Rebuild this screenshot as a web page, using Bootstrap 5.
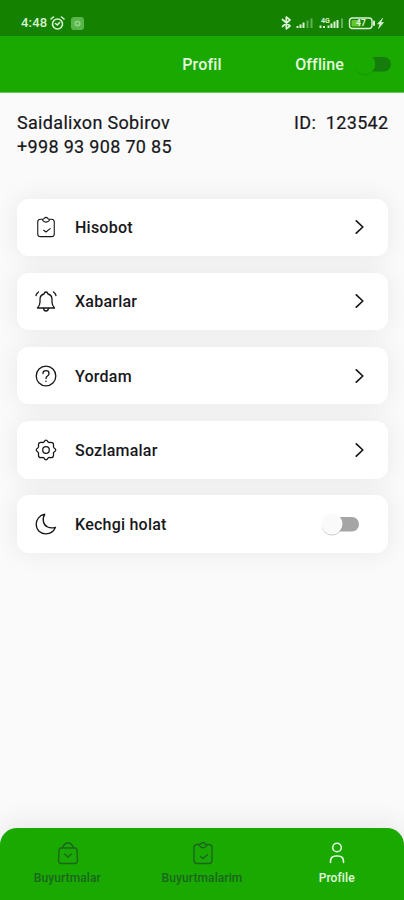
<!DOCTYPE html>
<html lang="uz">
<head>
<meta charset="utf-8">
<meta name="viewport" content="width=device-width, initial-scale=1">
<title>Profil</title>
<link rel="stylesheet" href="https://cdn.jsdelivr.net/npm/bootstrap@5.3.0/dist/css/bootstrap.min.css">
<style>
body{font-family:Roboto,"Liberation Sans",sans-serif;background:#fafafa;color:#17171b;font-weight:500;overflow:hidden}
svg{display:block;flex:none;fill:none;stroke:currentColor;stroke-linecap:round;stroke-linejoin:round}
svg.solid{stroke:none}
.status{height:36px;background:#148200;color:#d9f2d3;padding:10px 19px 0 21px}
.clock{font-size:13px;line-height:26px;letter-spacing:.2px;width:29px}
.chip{width:13px;height:13px;border-radius:3px;background:#58b44b;margin-left:6px}
.dot{stroke:#8bd381}
.topbar{height:57px;background:#1aa900;color:#e4f8df;border-bottom:1px solid #66c755;font-size:16px}
.topbar .title{letter-spacing:.2px;padding-top:1px}
.topbar .toggle{letter-spacing:.12px;padding-top:2px}
.topbar .toggle svg{margin-right:12px}
.who{font-size:18px;line-height:24px;padding:18px 16px 0 17px;height:105.5px;font-weight:400;-webkit-text-stroke:.2px currentColor}
.who .nm{letter-spacing:.32px}
.who .ph{letter-spacing:.32px}
.who .idn{letter-spacing:.34px;margin-right:-.5px;white-space:pre}
.menu{gap:16.6px;padding:0 16px 0 17px}
.item{height:57.6px;border-radius:12px;background:#fff;color:inherit;padding:0 24.5px 0 18px;font-size:16px;letter-spacing:.23px;position:relative}
.item::before{content:"";position:absolute;inset:0;border-radius:12px;box-shadow:0 0 26px rgba(0,0,0,.075);z-index:-1}
.item .lbl{margin-left:18px;padding-top:2px}
.tabs{height:72px;background:#1aa900;border-radius:17px 17px 0 0;font-size:12px;color:#1b661f;box-shadow:0 -4px 26px rgba(40,40,80,.09)}
.tabs a{color:inherit;padding-top:13px;line-height:16px;letter-spacing:.1px}
.tabs a.on{color:#e4f8df}
.tabs svg{margin-bottom:5px;margin-left:1px}
</style>
<script src="https://cdn.jsdelivr.net/npm/bootstrap@5.3.0/dist/js/bootstrap.bundle.min.js"></script>
</head>
<body class="vh-100 d-flex flex-column">
<svg width="0" height="0" class="position-absolute">
  <symbol id="clip" viewBox="0 0 24 24"><path d="M8.500 3.500H6Q3 3.500 3 6.500V19.500Q3 22.500 6 22.500H18Q21 22.500 21 19.500V6.500Q21 3.500 18 3.500H15.500M8.500 3.500Q10 3.500 10 2.500Q12 .5 14 2.500Q14 3.500 15.500 3.500V5Q12 8.500 8.500 5ZM9.500 15.500L12 17.500L16.500 13.800"/></symbol>
  <symbol id="chev" viewBox="0 0 9 16"><path d="M1.300 1.800L7.800 8L1.300 14.200"/></symbol>
</svg>
<header>
  <div class="status d-flex">
    <div class="d-flex align-items-center w-100 h-100">
      <span class="clock">4:48</span>
      <svg width="15" height="15" viewBox="0 0 15 15" stroke-width="1.600"><circle cx="7.500" cy="8" r="5"/><path d="M1 3L3.500 1M14 3L11.500 1M5.500 7.500L7.300 9L9.500 6.500"/></svg>
      <span class="chip d-flex align-items-center justify-content-center"><svg class="dot" width="7" height="7" viewBox="0 0 7 7" stroke-width="1.800"><circle cx="3.500" cy="3.500" r="2.200"/></svg></span>
      <svg class="ms-auto" width="104" height="18" viewBox="281 14 104 18">
        <path stroke-width="1.700" d="M282.500 19.500L290 26L286.300 28.800V17L290 20L282.500 26.500"/>
        <g stroke-width="2" stroke-linecap="butt"><path d="M297.500 28V26M300.500 28V24.500M303.500 28V22.500M328.500 28V25.500M331.500 28V23.500M334.500 28V21.500M337.500 28V20"/><path opacity=".4" d="M307.500 28V20.500M311.500 28V18.500M342 28V18.500"/><path d="M320.500 28V25.500M324 28V26"/></g>
        <text x="321" y="22.500" font-size="7" font-weight="700" fill="currentColor" stroke="none">4G</text>
        <rect x="349.500" y="18" width="22.500" height="10.500" rx="3" stroke-width="1.400"/><path stroke-width="2" d="M374 21.500V25"/>
        <rect x="351.500" y="20" width="9" height="6.500" rx="1" fill="#65c52b" stroke="none"/>
        <text x="356" y="26.300" font-size="8.500" font-weight="700" fill="currentColor" stroke="none">47</text>
        <path fill="currentColor" stroke-width=".6" d="M382.500 18.500L377.500 24H380L378.500 28.500L383.500 22.500H381Z"/>
      </svg>
    </div>
  </div>
  <div class="topbar row g-0 align-items-center">
    <div class="col"></div>
    <div class="col-auto title">Profil</div>
    <div class="col toggle d-flex justify-content-end align-items-center">
      <span>Offline</span>
      <svg class="solid ms-2" width="40" height="26" viewBox="0 0 40 26"><rect x="8" y="5" width="31" height="14.500" rx="7.200" fill="#147d0c"/><circle cx="13" cy="13.500" r="10" fill="#148d05" opacity=".55"/><circle cx="13" cy="12" r="10.300" fill="#1aa900"/></svg>
    </div>
  </div>
</header>
<section class="who d-flex justify-content-between">
  <div><div class="nm">Saidalixon Sobirov</div><div class="ph">+998 93 908 70 85</div></div>
  <div class="idn">ID:  123542</div>
</section>
<main class="menu d-flex flex-column position-relative z-0">
  <a class="item d-flex align-items-center text-decoration-none"><svg width="22" height="22" stroke-width="1.200"><use href="#clip"/></svg><span class="lbl">Hisobot</span><svg class="ms-auto" width="9" height="16" stroke-width="1.700"><use href="#chev"/></svg></a>
  <a class="item d-flex align-items-center text-decoration-none"><svg width="22" height="22" viewBox="0 0 22 22" stroke-width="1.300"><path d="M2.500 18H19.500Q17 15.500 17 12V9.500Q17 5 13 4Q12.500 2 11 2Q9.500 2 9 4Q5 5 5 9.500V12Q5 15.500 2.500 18ZM8.500 18.500Q9 21 11 21Q13 21 13.500 18.500M1 5.500Q1.500 3.500 3.500 2M21 5.500Q20.500 3.500 18.500 2"/></svg><span class="lbl">Xabarlar</span><svg class="ms-auto" width="9" height="16" stroke-width="1.700"><use href="#chev"/></svg></a>
  <a class="item d-flex align-items-center text-decoration-none"><svg width="22" height="22" viewBox="0 0 22 22" stroke-width="1.300"><circle cx="11" cy="11" r="9.800"/><path d="M8 8.500Q8 5.700 11 5.700Q14 5.700 14 8.500Q14 10 12.500 11Q11 12 11 13.500M11 16.200V16.400"/></svg><span class="lbl">Yordam</span><svg class="ms-auto" width="9" height="16" stroke-width="1.700"><use href="#chev"/></svg></a>
  <a class="item d-flex align-items-center text-decoration-none"><svg width="22" height="22" viewBox="0 0 22 22" stroke-width="1.300"><circle cx="11" cy="11" r="3.300"/><path d="M11 1.200Q12 1.200 13.200 3.200Q14 3.700 15.500 3.300Q18.800 3 18.500 6.500Q18.200 8 18.900 8.800Q20.800 10 20.800 11Q20.800 12 18.900 13.200Q18.200 14 18.500 15.500Q18.800 19 15.500 18.700Q14 18.300 13.200 18.800Q12 20.800 11 20.800Q10 20.800 8.800 18.800Q8 18.300 6.500 18.700Q3.200 19 3.500 15.500Q3.800 14 3.100 13.200Q1.200 12 1.200 11Q1.200 10 3.100 8.800Q3.800 8 3.500 6.500Q3.200 3 6.500 3.300Q8 3.700 8.800 3.200Q10 1.200 11 1.200Z"/></svg><span class="lbl">Sozlamalar</span><svg class="ms-auto" width="9" height="16" stroke-width="1.700"><use href="#chev"/></svg></a>
  <div class="item d-flex align-items-center"><svg width="22" height="22" viewBox="0 0 22 22" stroke-width="1.300"><path d="M9.800 1.200C4.500 2.200 1.200 6.500 1.200 11.300C1.200 17 5.500 20.800 10.800 20.800C15.300 20.800 18.800 18.500 20.500 14.300C14.500 16 9.500 13.500 8.500 9C7.800 6 8.300 3.500 9.800 1.200Z"/></svg><span class="lbl">Kechgi holat</span>
    <svg class="solid ms-auto me-1" width="40" height="28" viewBox="0 0 40 28"><rect x="8" y="7" width="31" height="14.500" rx="7.200" fill="#a5a5a5"/><circle cx="12" cy="15.300" r="10.300" fill="#000" opacity=".2"/><circle cx="12" cy="14" r="10.500" fill="#fafafa"/></svg></div>
</main>
<nav class="tabs row g-0 mt-auto text-center">
  <a class="col d-flex flex-column align-items-center text-decoration-none"><svg width="22" height="24" viewBox="0 0 22 24" stroke-width="1.400"><path d="M4 7Q2 7 2 10L1.500 19Q1.500 22.500 4.500 22.500H17.500Q20.500 22.500 20.500 19L20 10Q20 7 18 7ZM5.500 7Q7 2 11 2Q15 2 16.500 7M7.500 13L11 16L14.500 13"/></svg>Buyurtmalar</a>
  <a class="col d-flex flex-column align-items-center text-decoration-none"><svg width="24" height="24" stroke-width="1.400"><use href="#clip"/></svg>Buyurtmalarim</a>
  <a class="col on d-flex flex-column align-items-center text-decoration-none"><svg width="22" height="24" viewBox="0 0 22 24" stroke-width="1.600"><circle cx="11" cy="6.500" r="4.300"/><path d="M4.500 21.500V20.500Q4.500 15 10 15H12Q17.500 15 17.500 20.500V21.500"/></svg>Profile</a>
</nav>
</body>
</html>
